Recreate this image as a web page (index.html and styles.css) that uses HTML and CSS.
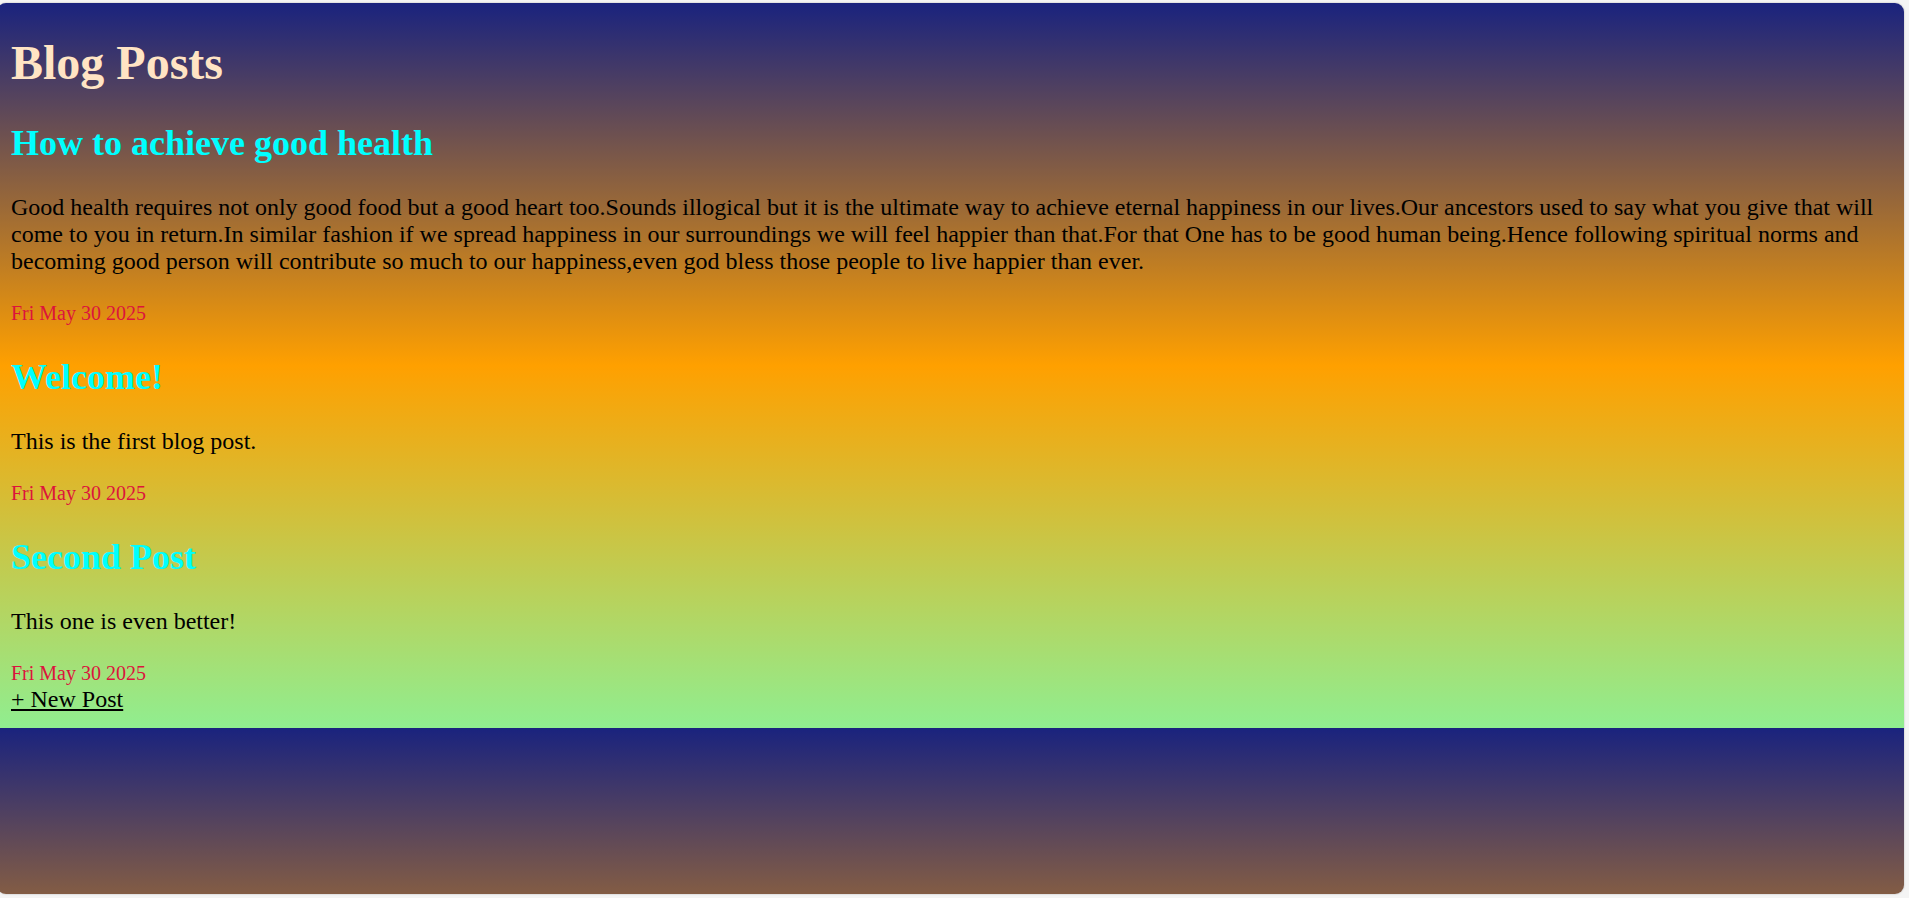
FILE: index.html
```html
<!DOCTYPE html>
<html lang="en">
<head>
<meta charset="utf-8">
<title>Blog Posts</title>
<link rel="stylesheet" href="styles.css">
</head>
<body>
<div class="window">
  <div class="page">
    <h1 class="title">Blog Posts</h1>
    <div class="post">
      <h2 class="post-title">How to achieve good health</h2>
      <p class="post-body">Good health requires not only good food but a good heart too.Sounds illogical but it is the ultimate way to achieve eternal happiness in our lives.Our ancestors used to say what you give that will come to you in return.In similar fashion if we spread happiness in our surroundings we will feel happier than that.For that One has to be good human being.Hence following spiritual norms and becoming good person will contribute so much to our happiness,even god bless those people to live happier than ever.</p>
      <small class="post-date">Fri May 30 2025</small>
    </div>
    <div class="post">
      <h2 class="post-title">Welcome!</h2>
      <p class="post-body">This is the first blog post.</p>
      <small class="post-date">Fri May 30 2025</small>
    </div>
    <div class="post">
      <h2 class="post-title">Second Post</h2>
      <p class="post-body">This one is even better!</p>
      <small class="post-date">Fri May 30 2025</small>
    </div>
    <a class="new-post" href="#">+ New Post</a>
  </div>
</div>
</body>
</html>
```

FILE: styles.css
```css
html, body {
  margin: 0;
  height: 100%;
}

body {
  background: #f4f4f4;
  padding-top: 3px;
  box-sizing: border-box;
  overflow: hidden;
  font-family: "Liberation Serif", "Times New Roman", serif;
  font-size: 24px;
}

.window {
  margin-left: -3px;
  width: 1907px;
  height: 891px;
  border-radius: 9px;
  overflow: hidden;
  box-shadow: 0 0 2px rgba(0, 0, 0, 0.28);
  background-image: linear-gradient(to bottom, #1a237e, #ffa000, #90ee90);
  background-size: 100% 725px;
  background-repeat: repeat-y;
}

.page {
  padding: 0 8px 0 14px;
}

.title {
  font-size: 48px;
  margin: 32px 0;
  color: #ffe4c4;
}

.post-title {
  font-size: 36px;
  margin: 30px 0;
  color: #00ffff;
}

.post-body {
  margin: 24px 0;
  color: #000;
}

.post-date {
  font-size: 20px;
  color: #dc143c;
}

.new-post {
  color: #000;
  text-decoration: underline;
}
```
